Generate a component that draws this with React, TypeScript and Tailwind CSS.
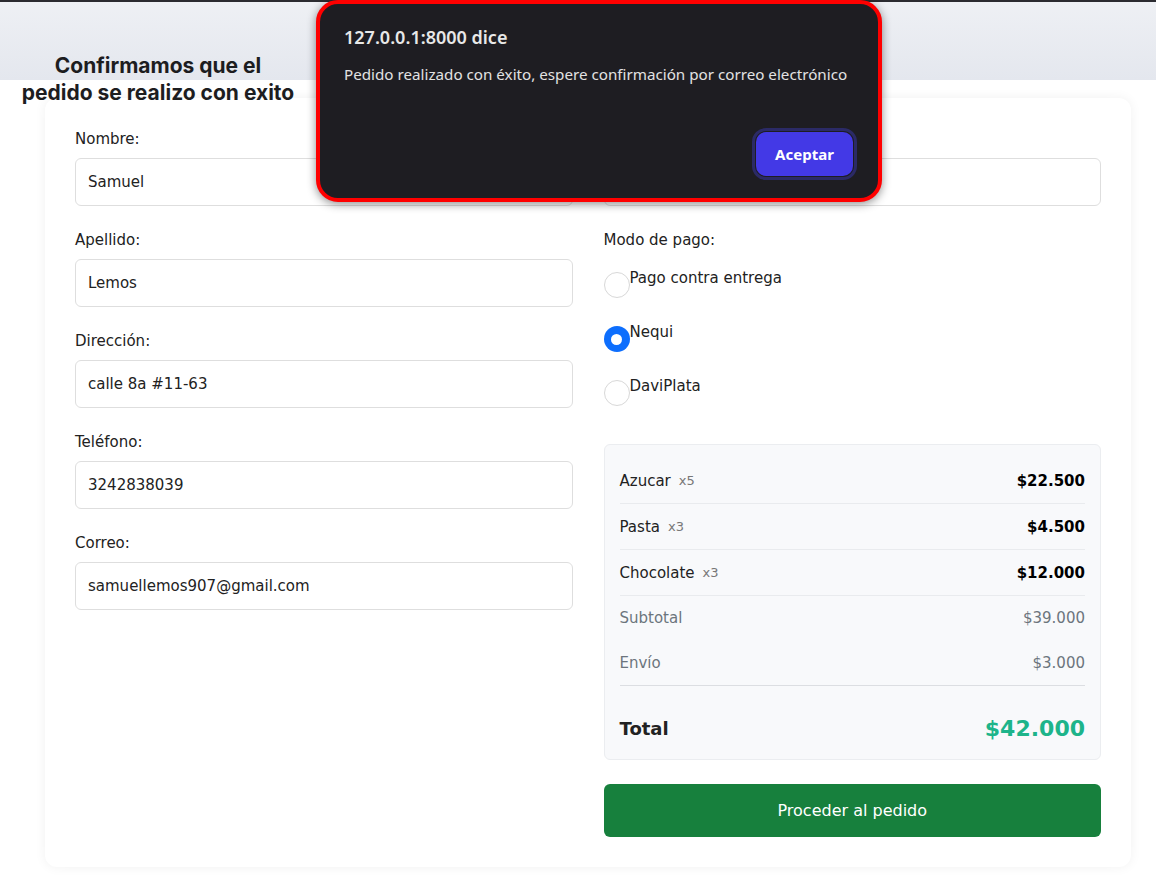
import React from 'react';

const fields = [
  { label: 'Nombre:', value: 'Samuel' },
  { label: 'Apellido:', value: 'Lemos' },
  { label: 'Dirección:', value: 'calle 8a #11-63' },
  { label: 'Teléfono:', value: '3242838039' },
  { label: 'Correo:', value: 'samuellemos907@gmail.com' },
];

const payments = [
  { name: 'Pago contra entrega', checked: false },
  { name: 'Nequi', checked: true },
  { name: 'DaviPlata', checked: false },
];

const items = [
  { name: 'Azucar', qty: 'x5', price: '$22.500' },
  { name: 'Pasta', qty: 'x3', price: '$4.500' },
  { name: 'Chocolate', qty: 'x3', price: '$12.000' },
];

function Field({ label, value }: { label: string; value: string }) {
  return (
    <div className="mb-[23px]">
      <label className="block text-[15px] leading-[22px] text-[#222] mb-2">{label}</label>
      <div className="h-[48px] flex items-center px-3 border border-[#dedede] rounded-md text-[15px] text-[#222]">
        {value}
      </div>
    </div>
  );
}

export default function App() {
  return (
    <div className="relative min-h-[892px] bg-white font-['DejaVu_Sans',sans-serif]">
      <div className="h-[2px] bg-[#2b2b30]" />

      {/* Header */}
      <header className="h-[78px] bg-gradient-to-b from-[#eef0f4] to-[#e4e7ee] pt-[50px]">
        <h1 className="w-[316px] text-center font-['Inter',sans-serif] font-bold text-[21px] leading-[27px] text-[#1d1d1f]">
          Confirmamos que el
          <br />
          pedido se realizo con exito
        </h1>
      </header>

      {/* Checkout card */}
      <div className="ml-[45px] mt-[18px] w-[1086px] bg-white rounded-xl shadow-[0_0_12px_rgba(0,0,0,0.06)] px-[30px] pt-[30px] pb-[30px]">
        <div className="grid grid-cols-2 gap-x-[31px]">
          <div>
            {fields.map((f) => (
              <Field key={f.label} label={f.label} value={f.value} />
            ))}
          </div>

          <div>
            <Field label="Ciudad:" value="" />
            <label className="block text-[15px] leading-[22px] text-[#222]">Modo de pago:</label>
            <div className="mt-[19px] space-y-[26px]">
              {payments.map((p) => (
                <div key={p.name} className="flex items-start">
                  {p.checked ? (
                    <span className="mt-[2px] w-[26px] h-[26px] rounded-full bg-[#0d6efd] flex items-center justify-center shrink-0">
                      <span className="w-[11px] h-[11px] rounded-full bg-white" />
                    </span>
                  ) : (
                    <span className="mt-[2px] w-[26px] h-[26px] rounded-full border border-[#d8d8d8] bg-white shrink-0" />
                  )}
                  <span className="-mt-[3px] text-[15px] leading-[22px] text-[#222]">{p.name}</span>
                </div>
              ))}
            </div>

            {/* Summary */}
            <div className="mt-[38px] bg-[#f8f9fb] border border-[#ebedf0] rounded-md px-[15px] pt-[13px]">
              {items.map((it) => (
                <div key={it.name} className="flex items-center justify-between pt-[12px] pb-[11px] border-b border-[#e9ebee]">
                  <div className="flex items-center">
                    <span className="text-[15px] leading-[22px] font-medium text-[#222]">{it.name}</span>
                    <span className="ml-2 text-[13px] text-[#777]">{it.qty}</span>
                  </div>
                  <span className="text-[15px] leading-[22px] font-bold text-black">{it.price}</span>
                </div>
              ))}
              <div className="flex items-center justify-between py-[11px] text-[15px] leading-[22px] text-[#6c757d]">
                <span>Subtotal</span>
                <span>$39.000</span>
              </div>
              <div className="flex items-center justify-between pt-[12px] pb-[11px] border-b border-[#dcdee2] text-[15px] leading-[22px] text-[#6c757d]">
                <span>Envío</span>
                <span>$3.000</span>
              </div>
              <div className="flex items-center justify-between pt-[27px] pb-[14px] leading-[32px]">
                <span className="text-[18px] font-bold text-[#222]">Total</span>
                <span className="text-[22px] font-bold text-[#1db48a]">$42.000</span>
              </div>
            </div>

            <button className="mt-[24px] w-full h-[53px] rounded-md bg-[#17803d] text-white text-[16px]">
              Proceder al pedido
            </button>
          </div>
        </div>
      </div>

      {/* Browser alert */}
      <div className="absolute left-[316px] top-0 w-[566px] h-[202px] rounded-[22px] border-[4px] border-[#ff0000] bg-[#1e1d22] shadow-[0_2px_10px_rgba(0,0,0,0.45)] font-['Noto_Sans',sans-serif] pl-[24px] pr-[24px]">
        <div className="pt-[20px] text-[18px] leading-[26px] font-semibold text-[#e8e8e8]">127.0.0.1:8000 dice</div>
        <div className="mt-[13px] text-[15.2px] leading-[22px] text-[#e2e2e2]">
          Pedido realizado con éxito, espere confirmación por correo electrónico
        </div>
        <div className="flex justify-end mt-[47px] pr-[1px]">
          <button className="h-[44px] w-[97px] rounded-[10px] bg-[#4339e6] text-white text-[15px] font-bold outline outline-[3px] outline-[#2b2a66] outline-offset-[1px]">
            Aceptar
          </button>
        </div>
      </div>
    </div>
  );
}
